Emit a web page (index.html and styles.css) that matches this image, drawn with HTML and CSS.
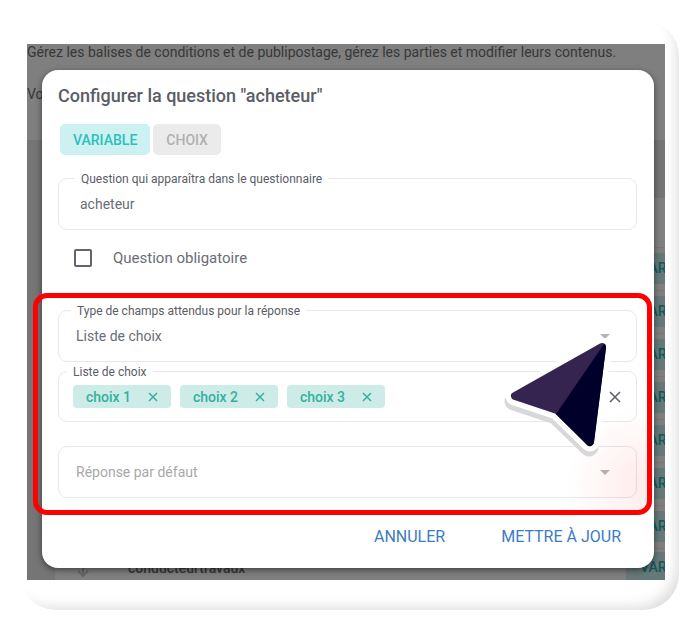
FILE: index.html
```html
<!DOCTYPE html>
<html lang="fr">
<head>
  <meta charset="UTF-8">
  <meta name="viewport" content="width=device-width, initial-scale=1.0">
  <title>Configurer la question</title>
  <link rel="stylesheet" href="styles.css">
</head>
<body>
  <div class="card">
    <div class="app">
      <div class="page">
        <p>Gérez les balises de conditions et de publipostage, gérez les parties et modifier leurs contenus.</p>
        <p>Vo</p>
        <div class="panel">
          <table class="questions">
            <thead>
              <tr><th></th><th></th><th></th></tr>
            </thead>
            <tbody>
              <tr><td></td><td></td><td><span class="tag">VARIABLE</span></td></tr>
              <tr><td></td><td></td><td><span class="tag">VARIABLE</span></td></tr>
              <tr><td></td><td></td><td><span class="tag">VARIABLE</span></td></tr>
              <tr><td></td><td></td><td><span class="tag">VARIABLE</span></td></tr>
              <tr><td></td><td></td><td><span class="tag">VARIABLE</span></td></tr>
              <tr><td></td><td></td><td><span class="tag">VARIABLE</span></td></tr>
              <tr><td></td><td></td><td><span class="tag">VARIABLE</span></td></tr>
              <tr>
                <td class="move">
                  <svg width="12" height="22" viewBox="0 0 12 22"><path d="M6 0v19M1 14l5 5 5-5" fill="none" stroke="#ccc" stroke-width="2"/></svg>
                </td>
                <td>conducteurtravaux</td>
                <td><span class="tag">VARIABLE</span></td>
              </tr>
            </tbody>
          </table>
        </div>
      </div>

      <div class="backdrop">
        <form class="dialog" role="dialog" aria-labelledby="dialog-title">
          <h2 id="dialog-title">Configurer la question "acheteur"</h2>

          <div class="tabs">
            <button type="button" class="tab active">VARIABLE</button>
            <button type="button" class="tab">CHOIX</button>
          </div>

          <div class="field wide">
            <label for="question">Question qui apparaîtra dans le questionnaire</label>
            <input type="text" id="question" value="acheteur">
          </div>

          <div class="check">
            <input type="checkbox" id="required">
            <label for="required">Question obligatoire</label>
          </div>

          <div class="answer">
            <div class="field">
              <label for="type">Type de champs attendus pour la réponse</label>
              <select id="type"><option>Liste de choix</option></select>
              <svg class="arrow" width="10" height="5" viewBox="0 0 10 5"><path d="M0 0h10L5 5z" fill="#b5b5b5"/></svg>
            </div>

            <div class="field chips">
              <label for="choices">Liste de choix</label>
              <span class="chip">choix 1 <button type="button" aria-label="Supprimer choix 1"><svg width="10" height="10" viewBox="0 0 10 10"><path d="M1 1l8 8M9 1l-8 8"/></svg></button></span>
              <span class="chip">choix 2 <button type="button" aria-label="Supprimer choix 2"><svg width="10" height="10" viewBox="0 0 10 10"><path d="M1 1l8 8M9 1l-8 8"/></svg></button></span>
              <span class="chip">choix 3 <button type="button" aria-label="Supprimer choix 3"><svg width="10" height="10" viewBox="0 0 10 10"><path d="M1 1l8 8M9 1l-8 8"/></svg></button></span>
              <input type="text" id="choices">
              <button type="button" class="clear" aria-label="Effacer"><svg width="12" height="12" viewBox="0 0 12 12"><path d="M1 1l10 10M11 1L1 11"/></svg></button>
            </div>

            <div class="field default">
              <select id="default" aria-label="Réponse par défaut"><option>Réponse par défaut</option></select>
              <svg class="arrow" width="10" height="5" viewBox="0 0 10 5"><path d="M0 0h10L5 5z" fill="#b5b5b5"/></svg>
            </div>

            <div class="highlight"></div>
            <svg class="cursor" width="112" height="120" viewBox="0 0 112 120">
              <g stroke-linejoin="round">
                <path d="M98 16L14 63l42 14 33 32z" fill="#d8d8d8" stroke="#d8d8d8" stroke-width="19"/>
                <path d="M102 9L15 58l42 14 33 32z" fill="#fff" stroke="#fff" stroke-width="19"/>
                <path d="M102 9L15 58l42 14 33 32z" fill="#35244f" stroke="#35244f" stroke-width="8"/>
                <path d="M104 6Q106 7 106 10L94 104Q93 109 88 108L56 76z" fill="#00002b"/>
              </g>
            </svg>
          </div>

          <div class="actions">
            <button type="button">ANNULER</button>
            <button type="submit">METTRE À JOUR</button>
          </div>
        </form>
      </div>
    </div>
  </div>
</body>
</html>
```

FILE: styles.css
```css
* { box-sizing: border-box; }
body { margin: 0; padding: 20px 13px 13px 20px; background: #fff; font-family: Roboto, sans-serif; font-size: 14px; color: #5a5d66; }
button, input, select { font: inherit; color: inherit; border: 0; margin: 0; padding: 0; background: none; }

.card { padding: 24px 14px 30px 7px; border-radius: 36px; box-shadow: inset -10px -10px 14px -8px rgba(0,0,0,0.14); }
.app { display: grid; grid-template-columns: minmax(0, 1fr); overflow: hidden; }
.page, .backdrop { grid-area: 1 / 1; min-width: 0; }

/* page behind the dialog */
.page { height: 0; min-height: 100%; color: #707070; }
.page p { margin: 0; height: 42px; line-height: 17px; white-space: nowrap; }
.page p:nth-child(2) { height: 54px; }
.panel { background: #eaeaea; padding: 58px 0 0 28px; }
.questions { width: 720px; table-layout: fixed; border-collapse: collapse; background: #fff; font-weight: 500; }
.questions th { height: 49px; }
.questions th:first-child { width: 73px; }
.questions th:nth-child(2) { width: 498px; }
.questions td { height: 43px; padding: 0; border-top: 1px solid #eee; }
.questions tr:last-child td { height: 39px; }
.questions .move { padding-left: 22px; }
.questions svg { display: block; }
.tag { display: inline-block; padding: 0 14px; line-height: 31px; border-radius: 4px; background: #cdf1f0; color: #22b5b5; vertical-align: middle; }

/* dialog */
.backdrop { padding: 26px 11px 12px 15px; background: rgba(0,0,0,0.5); }
.dialog { padding: 16px 17px 14px 16px; border-radius: 16px; background: #fff; box-shadow: 0 2px 6px rgba(0,0,0,0.5); }
.dialog h2 { margin: 0 0 18px; font-size: 18px; line-height: 20px; font-weight: 500; }

.tabs { display: flex; gap: 3px; margin: 0 0 23px 2px; }
.tab { height: 31px; padding: 0 13px; border-radius: 5px; background: #ebebeb; color: #b0b0b0; font-weight: 500; }
.tab.active { background: #cdf1f0; color: #2cc0bd; }

.field { position: relative; display: flex; align-items: center; height: 52px; padding: 0 26px 0 17px; border: 1px solid #e8e8e8; border-radius: 9px; }
.field label { position: absolute; top: -7px; left: 12px; padding: 0 6px; background: #fff; font-size: 12px; line-height: 14px; }
.field input, .field select { flex: 1; min-width: 0; height: 36px; appearance: none; outline: 0; color: #6a6d75; }
.wide { padding-left: 21px; }
.wide label { left: 16px; }

.check { display: flex; align-items: center; gap: 21px; height: 20px; margin: 18px 0 42px 16px; font-size: 15px; color: #6a6d75; }
.check input { appearance: none; width: 18px; height: 18px; border: 2px solid #62656d; border-radius: 2px; }

.answer { position: relative; }
.arrow { flex: none; }
.chips { gap: 9px; margin: 9px 0 24px; padding: 0 15px 0 14px; height: 51px; }
.chips label { left: 8px; }
.chip { display: flex; align-items: center; justify-content: space-between; width: 98px; height: 23px; padding: 0 13px; border-radius: 4px; background: #cdece7; color: #35b09f; font-weight: 500; }
.chip button, .clear { display: flex; }
.chip path, .clear path { fill: none; stroke: currentColor; stroke-width: 1.5; }
.field.default select { color: #a8a8a8; }

.highlight { position: absolute; inset: -17px -15px -17px -25px; border: 5px solid #fe0000; border-radius: 14px; background: radial-gradient(circle at 100% 88%, rgba(255,0,0,0.08) 0, rgba(255,0,0,0.06) 24px, transparent 80px); pointer-events: none; }
.cursor { position: absolute; top: 28px; right: 25px; pointer-events: none; }

.actions { display: flex; justify-content: flex-end; gap: 56px; margin-top: 20px; padding-right: 16px; color: #3b7cc4; font-size: 16px; }
.actions button { height: 36px; }
```
